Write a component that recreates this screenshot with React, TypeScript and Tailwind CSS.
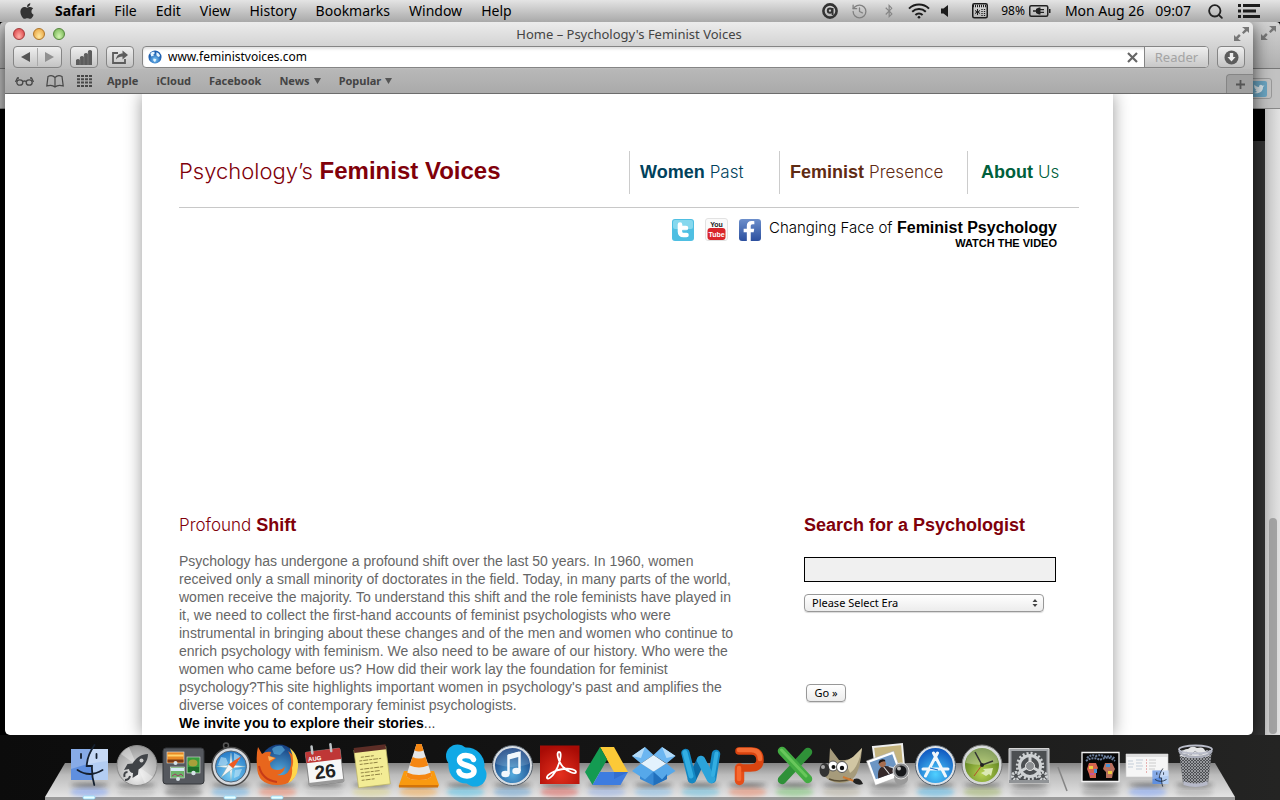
import React from "react";
import { FaApple, FaBluetoothB, FaFacebookF } from "react-icons/fa";
import { History, Search } from "lucide-react";

const MENUS = ["File", "Edit", "View", "History", "Bookmarks", "Window", "Help"];

function MenuBar() {
  return (
    <header className="relative z-10 flex h-[22px] items-center justify-between bg-linear-to-b from-[#e4e4e4] to-[#a9a9a9] pl-[18px] pr-5 text-sm leading-5 text-black">
      <nav aria-label="Menu bar" className="flex items-center gap-[19px]">
        <button aria-label="Apple menu" className="text-[#333]">
          <FaApple size={18} />
        </button>
        <button className="font-bold">Safari</button>
        {MENUS.map((m) => (
          <button key={m}>{m}</button>
        ))}
      </nav>
      <div className="flex items-center">
        <svg className="mr-3" width="18" height="18" viewBox="0 0 18 18" fill="none" stroke="#333">
          <circle cx="9" cy="9" r="6.6" strokeWidth="2.6" />
          <circle cx="9" cy="8.6" r="2.2" strokeWidth="2" />
          <path d="M11.6 6v7" strokeWidth="1.8" />
        </svg>
        <History size={17} strokeWidth={1.8} className="mr-[14px] text-[#808080]" />
        <FaBluetoothB size={14} className="mr-3 text-[#868686]" />
        <svg className="mr-[10px]" width="22" height="16" viewBox="0 0 22 16" fill="none" stroke="#1c1c1c" strokeWidth="2">
          <path d="M1 5.6a14.4 14.4 0 0 1 20 0M4.2 8.8a9.8 9.8 0 0 1 13.6 0M7.4 12a5.4 5.4 0 0 1 7.2 0" />
          <circle cx="11" cy="14.3" r="1.3" fill="#1c1c1c" stroke="none" />
        </svg>
        <svg className="mr-[23px]" width="9" height="14" viewBox="0 0 9 14" fill="#1c1c1c">
          <path d="M1 4.5h2.500L8 1v12L3.500 9.500H1z" />
        </svg>
        <svg className="mr-[13px]" width="16" height="16" viewBox="0 0 16 16">
          <rect x="0.75" y="0.75" width="14.5" height="14" rx="1.5" fill="none" stroke="#1c1c1c" strokeWidth="1.5" />
          <path d="M1 3h14" stroke="#1c1c1c" strokeWidth="2.5" strokeDasharray="1 1" />
          <path d="M5.500 6v6M3 7.500l5 3M3 10.500l5-3" stroke="#1c1c1c" />
          <path d="M10 6v7M12.500 6v7" stroke="#1c1c1c" strokeWidth="1.3" strokeDasharray="1 1" />
        </svg>
        <span className="mr-1 text-xs">98%</span>
        <svg className="mr-[14px]" width="22" height="12" viewBox="0 0 22 12">
          <rect x="0.75" y="0.75" width="18" height="10.5" rx="1.5" fill="none" stroke="#222" strokeWidth="1.5" />
          <path d="M20 4h1.500v4H20z" fill="#222" />
          <path d="M4 5.300h3V4c2-1.500 3-1.500 4.500-1.500V4H15v1.200h-3.500v1.600H15V8h-3.500v1.500C10 9.500 9 9.500 7 8V6.700H4z" fill="#222" />
        </svg>
        <time className="mr-4 flex gap-[11px]">
          <span>Mon Aug 26</span>
          <span>09:07</span>
        </time>
        <button aria-label="Spotlight" className="mr-[14px]">
          <Search size={17} strokeWidth={2.6} className="text-[#222]" />
        </button>
        <button aria-label="Notification Center">
          <svg width="22" height="14" viewBox="0 0 22 14" fill="#1c1c1c">
            <path d="M0 0h3v3H0zM5 0h17v3H5zM0 5.500h3v3H0zM5 5.500h13v3H5zM0 11h3v3H0zM5 11h17v3H5z" />
          </svg>
        </button>
      </div>
    </header>
  );
}

function ResizeArrows() {
  return (
    <svg width="15" height="14" viewBox="0 0 15 14" fill="#777">
      <path d="M8 0h7v6l-2-2-3.500 3L8 5.500 11 2.200zM7 14H0V8l2 2 3-3 1.700 1.700L4 11.800z" />
    </svg>
  );
}

function BackgroundWindow() {
  return (
    <div aria-hidden="true" className="absolute inset-x-0 top-0 bottom-[65px] flex flex-col overflow-hidden rounded-t-[4px] bg-[#333]">
      <div className="flex h-[47px] justify-end border-b border-[#777] bg-linear-to-b from-[#d2d2d2] to-[#b0b0b0] pt-1 pr-1">
        <ResizeArrows />
      </div>
      <div className="flex h-10 items-center justify-end border-b border-[#888] bg-[#c2c2c2] pr-2">
        <div className="flex h-[21px] w-8 items-center justify-end rounded-[3px] border border-[#999] pr-1">
          <svg width="16" height="16" viewBox="0 0 16 16">
            <rect width="16" height="16" rx="2" fill="#6ba5c2" />
            <path d="M3 12c5 1 9-1 9-6l1.500-1.500-2 .2C10 3 8 4 8 6 5.500 6 4.500 5 3.500 3.800c-1 3 1 4.500 2 5.200L4 9l2 2z" fill="#dce8ed" />
          </svg>
        </div>
      </div>
      <div className="flex flex-1 bg-black">
        <div className="flex-1" />
        <div className="w-10 border-t-[32px] border-black bg-[#333]" />
        <div className="flex w-[15px] flex-col items-center justify-end bg-linear-to-r from-[#c6c6c6] to-[#e2e2e2] pb-px">
          <div className="h-[216px] w-2 rounded-full bg-[#a2a2a2]" />
        </div>
      </div>
    </div>
  );
}

const TOOL =
  "flex h-[22px] items-center justify-center rounded-[4px] border border-[#858585] bg-linear-to-b from-[#efefef] to-[#c4c4c4]";

function BrowserChrome() {
  return (
    <div className="border-b border-[#6c6c6c] bg-[#b0b0b0] text-[#444]">
      <div className="bg-linear-to-b from-[#ececec] to-[#bcbcbc]">
        <div className="grid h-6 grid-cols-[1fr_auto_1fr] items-center px-2">
          <div className="flex gap-2">
            <button aria-label="Close" className="size-3 rounded-full border border-[#a13a3a] bg-radial-[at_50%_75%] from-[#ffb0a8] to-[#d8363c]" />
            <button aria-label="Minimize" className="size-3 rounded-full border border-[#ad7427] bg-radial-[at_50%_75%] from-[#ffe9a0] to-[#e69a35]" />
            <button aria-label="Zoom" className="size-3 rounded-full border border-[#53853c] bg-radial-[at_50%_75%] from-[#d2f5b0] to-[#6cae4b]" />
          </div>
          <h1 className="text-[13px] leading-5">Home – Psychology's Feminist Voices</h1>
          <button aria-label="Full screen" className="-mr-1 justify-self-end">
            <ResizeArrows />
          </button>
        </div>
        <div className="flex h-[23px] gap-2 px-2">
          <div className={TOOL + " w-[49px]"}>
            <button aria-label="Back" className="flex flex-1 justify-center border-r border-[#aaa] py-1">
              <svg width="9" height="10" viewBox="0 0 9 10" fill="#555"><path d="M9 0v10L0 5z" /></svg>
            </button>
            <button aria-label="Forward" className="flex flex-1 justify-center py-1">
              <svg width="9" height="10" viewBox="0 0 9 10" fill="#909090"><path d="M0 0v10l9-5z" /></svg>
            </button>
          </div>
          <button aria-label="Top Sites" className={TOOL + " w-7"}>
            <svg width="16" height="15" viewBox="0 0 16 15" fill="#5c5c5c">
              <path d="M0 10q2-2 4 0v5H0zM4 7q2-2 4 0v8H4zM8 4q2-2 4 0v11H8zM12 1q2-2 4 0v14H12z" />
              <path d="M4 8v7M8 5v10M12 2v13" stroke="#888" strokeWidth=".5" />
            </svg>
          </button>
          <button aria-label="Share" className={TOOL + " w-7"}>
            <svg width="16" height="14" viewBox="0 0 16 14">
              <path d="M6 3H1v10h12V9" fill="none" stroke="#5c5c5c" strokeWidth="1.8" />
              <path d="M4 9.500C4.500 5.500 7 3.500 10.500 3.500V0.500L16 5l-5.500 4.500V6.500C8 6.500 6 7.300 4 9.500z" fill="#5c5c5c" />
            </svg>
          </button>
          <div className="flex h-[22px] flex-1 items-center overflow-hidden rounded-[4px] border border-[#858585] bg-white pl-[5px] shadow-[inset_0_2px_3px_rgba(0,0,0,0.12)]">
            <svg width="14" height="14" viewBox="0 0 15 15">
              <defs>
                <radialGradient id="globe" cx="0.5" cy="0.7">
                  <stop offset="0" stopColor="#7cc7f7" />
                  <stop offset="1" stopColor="#1a5cae" />
                </radialGradient>
              </defs>
              <circle cx="7.500" cy="7.500" r="7" fill="url(#globe)" />
              <path d="M2.500 4c1-2 3-2.500 4.500-2L7 4 5.500 5l1 1-3 1zM9 2.500c2 .5 3.500 2 4 4l-2 1-2-2zM6 9l3 1-1.500 3-2-2z" fill="#e6f5ff" />
            </svg>
            <input
              aria-label="Address"
              defaultValue="www.feministvoices.com"
              className="ml-[6px] min-w-0 flex-1 bg-transparent text-[12px] text-black outline-none"
            />
            <button aria-label="Stop loading" className="mr-[6px]">
              <svg width="11" height="11" viewBox="0 0 11 11" stroke="#666" strokeWidth="2.200"><path d="M1 1l9 9M10 1l-9 9" /></svg>
            </button>
            <button className="h-full w-16 border-l border-[#858585] bg-linear-to-b from-[#efefef] to-[#c8c8c8] text-[13px] leading-5 text-[#a4a4a4]">
              Reader
            </button>
          </div>
          <button aria-label="Downloads" className={TOOL + " w-7"}>
            <svg width="15" height="15" viewBox="0 0 15 15">
              <circle cx="7.500" cy="7.500" r="7" fill="#5c5c5c" />
              <path d="M5.800 3h3.400v4h2.300l-4 4.500-4-4.500h2.300z" fill="#eee" />
            </svg>
          </button>
        </div>
      </div>
      <div className="flex h-6 items-center bg-linear-to-b from-[#b8b8b8] to-[#aaaaaa] pl-[10px] text-[11px] font-bold leading-4">
        <button aria-label="Reading List">
          <svg width="19" height="9" viewBox="0 0 19 9" fill="none" stroke="#484848" strokeWidth="1.300">
            <ellipse cx="4.800" cy="5.500" rx="3" ry="2.700" />
            <ellipse cx="14.200" cy="5.500" rx="3" ry="2.700" />
            <path d="M7.800 4.500q1.700-1 3.400 0M4 1L2.500 1 .5 5M15 1l1.500 0 2 4" />
          </svg>
        </button>
        <button aria-label="Bookmarks" className="ml-3">
          <svg width="18" height="13" viewBox="0 0 18 13" fill="none" stroke="#484848" strokeWidth="1.200">
            <path d="M9 2.500C7 .5 4 .5 2 1.500L.8 11c3-1 6-1 8.200 1 2.200-2 5.200-2 8.200-1L16 1.500C14 .5 11 .5 9 2.500zM9 2.500V12" />
          </svg>
        </button>
        <button aria-label="Top Sites grid" className="mr-[15px] ml-[13px]">
          <svg width="15" height="12" viewBox="0 0 15 12" stroke="#484848" strokeWidth="2">
            <path d="M0 1h15M0 4.300h15M0 7.600h15M0 10.900h15" strokeDasharray="3 1" />
          </svg>
        </button>
        <div className="flex items-center gap-[18px]">
          <a href="#apple">Apple</a>
          <a href="#icloud">iCloud</a>
          <a href="#facebook">Facebook</a>
          <button className="flex items-center gap-1">
            News
            <svg width="7" height="6" viewBox="0 0 7 6" fill="#555"><path d="M0 0h7L3.500 6z" /></svg>
          </button>
          <button className="flex items-center gap-1">
            Popular
            <svg width="7" height="6" viewBox="0 0 7 6" fill="#555"><path d="M0 0h7L3.500 6z" /></svg>
          </button>
        </div>
        <button aria-label="New tab" className="ml-auto flex h-[19px] w-[27px] items-center justify-center self-end rounded-tl-[4px] border-t border-l border-[#858585] bg-[#9f9f9f]">
          <svg width="9" height="9" viewBox="0 0 9 9" stroke="#555" strokeWidth="1.800"><path d="M4.500 0v9M0 4.500h9" /></svg>
        </button>
      </div>
    </div>
  );
}

function SocialLinks() {
  return (
    <div className="flex gap-[11px]">
      <a href="#twitter" aria-label="Twitter">
        <svg width="22" height="23" viewBox="0 0 22 23">
          <rect width="22" height="22" y="1" rx="3" fill="#4fbfe2" />
          <rect x="1" y="2" width="20" height="9" rx="2" fill="#86d8ee" />
          <path d="M8 6.500v7q0 3.500 3.500 3.500h3M8 10h6" fill="none" stroke="#fff" strokeWidth="4.600" strokeLinecap="round" />
          <path d="M10.500 12.300h4.500M10.500 12.300v1q0 1.200 1.500 1.200h3" fill="none" stroke="#6fcbe8" strokeWidth=".8" />
        </svg>
      </a>
      <a href="#youtube" aria-label="YouTube" className="flex size-[23px] justify-center rounded-[3px] border border-[#e2e2e2] bg-[#fafafa]">
        <svg width="21" height="22" viewBox="0 0 21 22">
          <rect x="1.500" y="9" width="18" height="12" rx="3" fill="#d9252a" />
          <g fontFamily="Liberation Sans Narrow, Liberation Sans, sans-serif" fontWeight="bold" textAnchor="middle">
            <text x="10.500" y="8" fontSize="7" fill="#222">You</text>
            <text x="10.500" y="17.500" fontSize="7" fill="#fff">Tube</text>
          </g>
        </svg>
      </a>
      <a href="#facebook-page" aria-label="Facebook page" className="mt-px flex size-[22px] items-end justify-end overflow-hidden rounded-[3px] bg-linear-to-b from-[#6d8fcb] to-[#2c4f9e] pr-[2px] text-white">
        <FaFacebookF size={20} />
      </a>
    </div>
  );
}

function SitePage() {
  return (
    <div className="flex flex-1 overflow-hidden rounded-b-[4px] bg-white pr-[3px] font-['Liberation_Sans',Arial,sans-serif]">
      <main className="mx-auto w-full max-w-[971px] bg-white pt-[57px] pr-[34px] pb-[3px] pl-[37px] shadow-[0_0_16px_rgba(0,0,0,0.4)]">
        <div className="flex w-full items-start justify-between border-b border-[#c8c8c8] pb-[13px]">
          <h2 className="text-2xl leading-10 font-bold text-[#80000a]">
            <span className="font-['Inter'] text-[22px] font-light">Psychology’s</span> Feminist Voices
          </h2>
          <nav aria-label="Site" className="flex text-lg leading-[43px] font-bold">
            <a href="#past" className="w-[150px] border-l border-[#ccc] pl-[10px] text-[#00425c]">
              Women <span className="font-['Inter'] text-[17px] font-light">Past</span>
            </a>
            <a href="#presence" className="w-[188px] border-l border-[#ccc] pl-[10px] text-[#5f2b13]">
              Feminist <span className="font-['Inter'] text-[17px] font-light">Presence</span>
            </a>
            <a href="#about" className="w-28 border-l border-[#ccc] pl-[13px] text-[#00603c]">
              About <span className="font-['Inter'] text-[17px] font-light">Us</span>
            </a>
          </nav>
        </div>
        <div className="flex justify-end gap-2 pt-[10px] pr-[22px]">
          <SocialLinks />
          <a href="#video" className="text-right font-bold text-black">
            <span className="block text-base leading-5">
              <span className="font-['Inter'] text-[15px] font-light">Changing Face of</span> Feminist Psychology
            </span>
            <span className="block text-[11px] leading-[11px]">WATCH THE VIDEO</span>
          </a>
        </div>
        <div className="mt-[264px] flex">
          <section className="w-[625px]">
            <h3 className="text-lg leading-6 font-bold text-[#80000a]">
              <span className="font-['Inter'] text-[17px] font-light">Profound</span> Shift
            </h3>
            <p className="mt-[15px] max-w-[562px] text-sm leading-[18px] text-[#666]">
              Psychology has undergone a profound shift over the last 50 years. In 1960, women received only a small
              minority of doctorates in the field. Today, in many parts of the world, women receive the majority. To
              understand this shift and the role feminists have played in it, we need to collect the first-hand accounts
              of feminist psychologists who were instrumental in bringing about these changes and of the men and women
              who continue to enrich psychology with feminism. We also need to be aware of our history. Who were the
              women who came before us? How did their work lay the foundation for feminist psychology?This site
              highlights important women in psychology's past and amplifies the diverse voices of contemporary feminist
              psychologists.
            </p>
            <p className="text-sm leading-[18px] text-[#444]">
              <b className="text-black">We invite you to explore their stories</b>...
            </p>
          </section>
          <form className="flex w-[252px] flex-col items-start" onSubmit={(e) => e.preventDefault()}>
            <label htmlFor="name" className="text-lg leading-6 font-bold text-[#80000a]">
              Search for a Psychologist
            </label>
            <input id="name" type="text" className="mt-5 h-[25px] w-full border border-black bg-[#f0f0f0] px-1 text-sm" />
            <div className="relative mt-3 w-60 font-['Noto_Sans',sans-serif]">
              <select
                aria-label="Era"
                className="block h-[18px] w-full appearance-none rounded-[4px] border border-[#989898] bg-linear-to-b from-white to-[#ececec] pl-[7px] text-[11px] leading-4 text-black shadow-[0_1px_1px_rgba(0,0,0,0.15)]"
              >
                <option>Please Select Era</option>
              </select>
              <svg className="pointer-events-none absolute top-[5px] right-[6px]" width="6" height="8" viewBox="0 0 6 8" fill="#444">
                <path d="M3 0l2.500 3h-5zM3 8L.5 5h5z" />
              </svg>
            </div>
            <button className="mt-[72px] ml-0.5 h-[18px] w-10 rounded-[4px] border border-[#989898] bg-linear-to-b from-white to-[#ececec] font-['Noto_Sans',sans-serif] text-[11px] leading-4 text-black shadow-[0_1px_1px_rgba(0,0,0,0.15)]">
              Go »
            </button>
          </form>
        </div>
      </main>
    </div>
  );
}

type DockItem = { name: string; glow: string; running?: boolean; art: React.ReactNode };

const FACE = (
  <>
    <path d="M5 14h22c-4 6-6 11-6.500 17H26c0 5 .3 9 1 14H5z" fill="#5f8fdf" />
    <path d="M27 14h15v31H27c-.7-5-1-9-1-14h-5.500c.5-6 2.500-11 6.500-17z" fill="#b3cdf2" />
    <path d="M5 14h37v12Q22 28 5 34z" fill="#fff" opacity=".25" />
    <path d="M28.500 10C23.500 17 21 24 20.700 31H26c-.3 7 .5 13 2.300 19M11.500 35q12 8 25 0M15 19v4M30.500 19v4" fill="none" stroke="#15202f" strokeWidth="1.800" strokeLinecap="round" />
  </>
);

const DOCK: DockItem[] = [
  { name: "Finder", glow: "#5f8fff", running: true, art: FACE },
  {
    name: "Launchpad",
    glow: "#aaa",
    art: (
      <>
        <circle cx="24" cy="30.500" r="20" fill="url(#silver)" stroke="#8a8a8a" />
        <path d="M24 30.500L8 19a20 20 0 0 1 8-7zM24 30.500L40 42a20 20 0 0 1-8 7z" fill="#fff" opacity=".35" />
        <path d="M35 19c-7 0-12 4-15.500 9.500l-5 .5-3.500 6 5-1c0 2 2 4 4 4l-.5 5 5.500-3.500.5-5C31 31 35 26 35 19z" fill="#404347" />
        <circle cx="28.500" cy="25.500" r="2" fill="#ccc" />
        <path d="M14.500 37q-4 0-3 5M17 41q-1 4-5 4" fill="none" stroke="#404347" strokeWidth="2" />
      </>
    ),
  },
  {
    name: "Mission Control",
    glow: "#444",
    art: (
      <>
        <rect x="3" y="13" width="41" height="36" rx="3" fill="#55585e" stroke="#34363a" />
        <g stroke="#ddd" strokeWidth=".6">
          <rect x="7" y="17" width="17" height="11" fill="#e98925" />
          <rect x="27" y="22" width="13" height="16" fill="#369b3d" />
          <rect x="10.500" y="32" width="14" height="11" fill="#6cb56b" />
        </g>
        <path d="M7.500 24.500h16v3h-16z" fill="#7b3a15" />
        <path d="M7.500 19.500h16v2h-16z" fill="#ffd36d" />
        <ellipse cx="33" cy="28" rx="4.500" ry="3.500" fill="#a8a03a" />
        <path d="M28 32h11v5H28z" fill="#1f6e2b" />
        <path d="M11 33h13v3H11z" fill="#d6e9f4" />
        <path d="M12 41l3-2 3 2 3-2 2 2" stroke="#a03a6a" fill="none" />
        <g fill="#d7e2e8">
          <circle cx="15.500" cy="28" r="2" /><circle cx="33.500" cy="38" r="2.200" /><circle cx="18" cy="44" r="2" />
        </g>
      </>
    ),
  },
  {
    name: "Safari",
    glow: "#3fa0e8",
    running: true,
    art: (
      <>
        <circle cx="19" cy="10.500" r="2.500" fill="none" stroke="#555" strokeWidth="1.500" />
        <circle cx="24" cy="31.500" r="19" fill="#d6d9dd" stroke="#4a4a4a" strokeWidth="1.500" />
        <circle cx="24" cy="31.500" r="15.500" fill="url(#blue)" stroke="#567" />
        <path d="M14 22l5 1 2 5-4 4-6-2zM27 18l6 3-1 5-5-1zM28 35l7-1-3 7-5 2z" fill="#bfe4f6" opacity=".6" />
        <path d="M24 18l1.400 12 12.600 1.500-12.600 1.500L24 45l-1.400-12L10 31.500 22.600 30z" fill="#f3f8fb" stroke="#9bb" strokeWidth=".4" />
        <path d="M34.500 21L26 33.500 21.500 29.500z" fill="#ee5a22" />
        <path d="M14 42.500l7.500-13L26 33.500z" fill="#f6f6f6" stroke="#8aa" strokeWidth=".5" />
      </>
    ),
  },
  {
    name: "Firefox",
    glow: "#f2643e",
    running: true,
    art: (
      <>
        <circle cx="25" cy="28" r="18.500" fill="url(#deep)" />
        <path d="M18 14q4-4 10-3l3 4-5 5-6-1z" fill="#56a7d7" opacity=".7" />
        <path d="M4 12l4 7q4-3 9-2l-1 4 6 2-6 5q0 7 7 7 6 0 8-4-1 8-8 9 12 2 14-10 1-8-3-14 9 6 9 17-1 17-20 17Q3 50 3 31q-1-12 1-19z" fill="#e8661d" />
        <path d="M36 13q9 8 8 19-1 12-10 16 5-7 4-15 3-9-2-20z" fill="#ffd64a" />
        <path d="M14 21l7 2-6 3z" fill="#f8b45e" />
        <path d="M5 31q3 14 18 16" fill="none" stroke="#c63b18" strokeWidth="2" />
      </>
    ),
  },
  {
    name: "Calendar",
    glow: "#bbb",
    art: (
      <g transform="rotate(-7 24 31)">
        <rect x="6" y="15" width="35" height="34" rx="1.500" fill="#f7f7f7" stroke="#777" strokeWidth=".8" />
        <path d="M6 15h35v11H6z" fill="#bf3736" />
        <path d="M6 46h35v3H6z" fill="#999" />
        <path d="M13 10v7M32 10v7" stroke="#bfc4c8" strokeWidth="2.500" strokeLinecap="round" />
        <text x="8" y="24.500" fontSize="6" fontWeight="bold" fill="#fff">AUG</text>
        <text x="23.500" y="43" fontSize="19" fontWeight="bold" fill="#222" textAnchor="middle">26</text>
      </g>
    ),
  },
  {
    name: "Stickies",
    glow: "#d9cf6e",
    art: (
      <g transform="rotate(-7 24 31)">
        <path d="M8 13h32v38H8z" fill="#f3ec95" stroke="#b9b165" strokeWidth=".7" />
        <path d="M8 11h32v5H8z" fill="#5c2d26" />
        <path d="M14 21h14M12 24.500h22M12 28h18M12 33h23M12 36.500h19M12 40h21M12 44h14" stroke="#8c7d3e" strokeWidth=".9" strokeDasharray="3 1 5 1" />
      </g>
    ),
  },
  {
    name: "VLC",
    glow: "#ff9a1f",
    art: (
      <>
        <path d="M9 36h30l5 14q0 2-2 2H5q-2 0-1-2z" fill="#f99a10" />
        <path d="M4 50h39v2.500H4z" fill="#d37408" />
        <path d="M21.500 9h5l10 31q0 5-12.500 5T11.500 40z" fill="#e6e6e6" />
        <path d="M21.500 9h5l2 6.500q-4.500 2-9 0zM17.500 22q6.500 3 13 0l2.700 8.500q-9.200 4-18.400 0zM12 37.500q12 5 24 0l.5 2.500q0 5-12.500 5T11.500 40z" fill="#f58611" />
      </>
    ),
  },
  {
    name: "Skype",
    glow: "#20b7ec",
    art: (
      <>
        <circle cx="15.500" cy="21" r="11.500" fill="#11a9e6" />
        <circle cx="33" cy="40" r="11.500" fill="#11a9e6" />
        <circle cx="24.500" cy="30.500" r="18" fill="#11a9e6" />
        <path d="M31.500 24.500C30 19.500 17.500 18.500 17.500 25c0 6.500 14.500 4.500 14.500 11 0 6.500-13.500 6.500-15 .5" fill="none" stroke="#fff" strokeWidth="5.500" strokeLinecap="round" />
      </>
    ),
  },
  {
    name: "iTunes",
    glow: "#418fd0",
    art: (
      <>
        <circle cx="23.500" cy="30.500" r="20" fill="#d7dde3" stroke="#56606a" />
        <circle cx="23.500" cy="30.500" r="17.500" fill="url(#deep)" />
        <path d="M7 29a16.500 16.500 0 0 1 33 0q-16 6-33 0z" fill="#fff" opacity=".15" />
        <path d="M19.500 39V21l11-3v18" fill="none" stroke="#f2f8fc" strokeWidth="2.500" />
        <path d="M19.500 22l11-3" stroke="#f2f8fc" strokeWidth="5" />
        <ellipse cx="16.500" cy="39" rx="4.200" ry="3.300" fill="#f2f8fc" />
        <ellipse cx="27.500" cy="36" rx="4.200" ry="3.300" fill="#f2f8fc" />
      </>
    ),
  },
  {
    name: "Adobe Reader",
    glow: "#e0352b",
    art: (
      <>
        <path d="M4 10.500h39.500V49H4z" fill="url(#red)" />
        <path d="M23 17c4 0 0 14-4 20-3 5-7 8-8 6-1-3 8-8 16-9 8-1 13 1 13 3 0 3-8 0-13-5-5-6-7-15-4-15z" fill="none" stroke="#fff" strokeWidth="1.800" />
      </>
    ),
  },
  {
    name: "Google Drive",
    glow: "#7ca0e8",
    art: (
      <>
        <path d="M17 12h14l14 25H31z" fill="#fcc937" />
        <path d="M17 12l7 12.500L9.500 50 2 37z" fill="#149b52" />
        <path d="M17 37h28l-7.500 13h-28z" fill="#3d7ce0" />
        <path d="M17 12l7 12.500L17 37z" fill="#0a8443" opacity=".4" />
        <path d="M31 37h14l-14 7z" fill="#2c5fc0" opacity=".5" />
      </>
    ),
  },
  {
    name: "Dropbox",
    glow: "#67b2ec",
    art: (
      <>
        <path d="M10 36v8l13.500 6.500L37 44v-8z" fill="#3789d4" />
        <path d="M15 12L2 21l9 7.500L23.500 20zM32 12l13.500 9-9 7.500L23.500 20z" fill="#6cb6f1" />
        <path d="M11 28.500L2 36l13 8.500 8.500-8zM36.500 28.500l9 7.500L32 44.500l-8.500-8z" fill="#56a8ea" />
        <path d="M23.500 20L36 28.500l-12.500 8-12.500-8z" fill="#e3f2fd" />
        <path d="M15 12L2 21l9 2zM32 12l13.500 9-9 2z" fill="#b4dbf8" />
        <path d="M23.500 37v13.500L37 44v-5l-5 5.500z" fill="#2170bd" />
      </>
    ),
  },
  {
    name: "Word",
    glow: "#3eb4e0",
    art: (
      <g fill="none" strokeLinecap="round">
        <g strokeWidth="8.500">
          <path d="M39 19L35 44" stroke="#1489c4" />
          <path d="M15 44L24 25" stroke="#0c6ba5" />
          <path d="M24 25L34 44" stroke="#2ba4da" />
          <path d="M8.500 18L15 44" stroke="#1489c4" />
        </g>
        <path d="M8 17.500L14 41" stroke="#33aee2" strokeWidth="5" />
        <path d="M39.500 18.500L36 40" stroke="#33aee2" strokeWidth="4" />
      </g>
    ),
  },
  {
    name: "PowerPoint",
    glow: "#ef6b41",
    art: (
      <g fill="none" strokeLinecap="round" strokeLinejoin="round">
        <path d="M15.500 33v12.500" stroke="#e64e19" strokeWidth="9.500" />
        <path d="M15 16h12q9 0 9 9 0 8-10 8H16" stroke="#d94410" strokeWidth="7.500" />
        <path d="M15 15h12q9 0 9 9" stroke="#f56c33" strokeWidth="4.500" />
        <path d="M15 33v11" stroke="#f8692f" strokeWidth="4.500" />
      </g>
    ),
  },
  {
    name: "Excel",
    glow: "#56bb4d",
    art: (
      <g fill="none" strokeLinecap="round">
        <path d="M37 17L11 45" stroke="#2f9138" strokeWidth="8.500" />
        <path d="M11 16L37 44" stroke="#43ac42" strokeWidth="8.500" />
        <path d="M10.500 15L35 41" stroke="#68c65b" strokeWidth="3" />
      </g>
    ),
  },
  {
    name: "GIMP",
    glow: "#aaa38b",
    art: (
      <>
        <path d="M12 13l9 12q8 1 14-3l9-9q-1 14-4 22-4 13-18 13-9 0-17-8l6-9z" fill="#a69b7b" />
        <path d="M44 13l-9 9q-4 3-8 4l5 12q8-5 12-25z" fill="#d1c6a3" />
        <circle cx="15" cy="31" r="5" fill="#fff" stroke="#555" /><circle cx="24" cy="32" r="5.500" fill="#fff" stroke="#555" />
        <circle cx="15.500" cy="32" r="2" fill="#111" /><circle cx="24" cy="33" r="2.200" fill="#111" />
        <ellipse cx="6.500" cy="35" rx="5" ry="7" fill="#333" /><circle cx="5" cy="32" r="2" fill="#aaa" />
        <path d="M11 44q10 4 22 0" fill="none" stroke="#584c33" strokeWidth="1.500" />
        <path d="M25 42l11 4" stroke="#cf7933" strokeWidth="2" />
        <path d="M36 44q6-2 9 5-6 2-10-2z" fill="#222" />
      </>
    ),
  },
  {
    name: "iPhoto",
    glow: "#888",
    art: (
      <>
        <path d="M8 12l29-3 2 22-28 3z" fill="#c5b47e" stroke="#eee" strokeWidth="2" />
        <g transform="rotate(-20 20 33)">
          <path d="M5 20h29v26H5z" fill="#fff" stroke="#aaa" strokeWidth=".5" />
          <path d="M7.500 22.500h24v18h-24z" fill="#6d96c4" />
          <path d="M10 40.500q2-9 8-10 8 1 11 10z" fill="#35292a" />
          <path d="M19 31l3 9M24 33l5 3" stroke="#ddd" />
          <circle cx="19" cy="28" r="3.500" fill="#a66d50" />
          <path d="M15.500 27q1-4 5-3 3 1 2 3-3-2-7 0z" fill="#1d1513" />
        </g>
        <path d="M29 41h14q1 8-7 9-7 0-7-9z" fill="#9a9a9a" />
        <circle cx="36" cy="36" r="8" fill="#8b8d90" stroke="#ddd" />
        <circle cx="36" cy="36" r="5.500" fill="#16181b" /><circle cx="34" cy="33.500" r="2" fill="#bbb" />
      </>
    ),
  },
  {
    name: "App Store",
    glow: "#21a7e8",
    art: (
      <>
        <circle cx="23.500" cy="30.500" r="20" fill="#dde2e7" stroke="#56606a" />
        <circle cx="23.500" cy="30.500" r="17.500" fill="url(#store)" />
        <path d="M25.500 18L13.500 41M21.500 18l12 23M11 34h25" stroke="#f1f7fb" strokeWidth="3" strokeLinecap="round" />
        <path d="M18 33l8 2" stroke="#196cc6" strokeWidth="1" />
      </>
    ),
  },
  {
    name: "Time Machine",
    glow: "#88a33c",
    art: (
      <>
        <circle cx="23" cy="30" r="20" fill="#d5d8d8" stroke="#777" />
        <circle cx="23" cy="30" r="17" fill="url(#lime)" />
        <path d="M7 28a16 16 0 0 1 32 0q-16 4-32 0z" fill="#fff" opacity=".3" />
        <path d="M34 33l-2 8-2-2-3 2-5-3 4-2-2-2z" fill="#dce9b4" />
        <path d="M16 17l7 13 11-4" fill="none" stroke="#333" strokeWidth="1.500" />
        <path d="M23 30l-8 11" stroke="#b54e2d" />
        <circle cx="23" cy="30" r="2" fill="#222" />
      </>
    ),
  },
  {
    name: "System Preferences",
    glow: "#999",
    art: (
      <>
        <path d="M3 13.500h40V48H3z" fill="#a2a5a9" stroke="#d5d5d5" />
        <path d="M5.500 16h35v29h-35z" fill="#4c4f52" />
        <g fill="none" stroke="#cfd2d4">
          <circle cx="24" cy="31" r="10.500" strokeWidth="3" />
          <circle cx="24" cy="31" r="12.700" strokeWidth="3" strokeDasharray="2 2" />
          <path d="M24 31V21M24 31l9 5M24 31l-9 5" strokeWidth="3" />
          <circle cx="10" cy="41" r="3.500" strokeWidth="3" strokeDasharray="2 1" />
          <circle cx="37" cy="41" r="3.500" strokeWidth="3" strokeDasharray="2 1" />
        </g>
        <circle cx="24" cy="31" r="4.500" fill="#8c8f92" stroke="#e2e2e2" />
        <path d="M3 45h40v3H3z" fill="#909396" />
      </>
    ),
  },
];

const DOCK_RIGHT: DockItem[] = [
  {
    name: "Picture window",
    glow: "#777",
    art: (
      <>
        <path d="M5 17.500h37v29H5z" fill="#060606" stroke="#f1f1f1" strokeWidth="1.300" />
        <path d="M10 23q4-4 9-2 5-2 10 1 6-2 9 2M9 26q7-5 14-1 8-5 15 1" fill="none" stroke="#687c9a" strokeWidth="2" strokeDasharray="2 1" />
        <path d="M12 28h7l2 5-2 3v7h-6l-1-4-2-5z" fill="#d5634f" />
        <path d="M28 28h7l3 6-2 4-1 5h-6v-6l-3-3z" fill="#b9705e" />
        <path d="M12 31h4v3h-4zM31 36h4v3h-4z" fill="#eacb40" />
        <path d="M17 34h3v4h-3zM29 29h4v3h-4z" fill="#4a8fd0" />
        <path d="M13 38h4v2h-4z" fill="#c4559c" />
      </>
    ),
  },
  {
    name: "Finder window",
    glow: "#5f8fff",
    art: (
      <>
        <path d="M2 19h42v23H2z" fill="#f6f6f6" stroke="#ccc" strokeWidth=".6" />
        <path d="M2 19h42v3H2z" fill="#dedede" />
        <path d="M4 26h5M4 29h6M4 32h5M12 25h7M12 28h6M12 31h7M12 34h6" stroke="#c3cdd8" />
        <path d="M22 25h1M22 28h1M22 31h1M22 34h1M22 37h1" stroke="#e29a9a" strokeWidth="1.500" />
        <path d="M25 25h7M25 28h7M25 31h7M25 34h6" stroke="#ccc" />
        <svg x="28" y="33" width="17" height="19" viewBox="4 9 39 42">{FACE}</svg>
      </>
    ),
  },
  {
    name: "Trash",
    glow: "#999",
    art: (
      <>
        <path d="M8 15h33l-4 33q-12 5-25 0z" fill="#4c4e52" />
        <path d="M8 15h33l-4 33q-12 5-25 0z" fill="url(#mesh)" />
        <path d="M9 21q3-8 8-7 4-4 9-1 7-2 8 3 5 1 4 5-14 4-29 0z" fill="#e4e5e6" />
        <path d="M15 17l5 3 4-4 5 4 4-2M13 20l4-1" fill="none" stroke="#a7a9ad" />
        <ellipse cx="24.500" cy="14.500" rx="16.500" ry="4" fill="none" stroke="#babdca" strokeWidth="1.800" />
        <path d="M8 16q3 6 16.500 6T41 16" fill="none" stroke="#a9acb8" strokeWidth="2" />
        <path d="M12.500 46q12 5 24 0v4q-12 4-24 0z" fill="#b6b9c8" />
      </>
    ),
  },
];

function DockIcon({ item }: { item: DockItem }) {
  return (
    <button aria-label={item.name} className="w-[47px]">
      <svg width="47" height="65" viewBox="0 0 47 65" fontFamily="Liberation Sans, sans-serif">
        <ellipse cx="23.500" cy="57" rx="19" ry="5" fill={item.glow} opacity=".4" filter="url(#soft)" />
        <ellipse cx="23.500" cy="50" rx="19" ry="2" fill="#222" opacity=".5" filter="url(#soft)" />
        {item.art}
        {item.running && <rect x="17" y="61" width="12" height="3" rx="1.500" fill="#eaffff" stroke="#8fdcff" strokeWidth=".8" />}
      </svg>
    </button>
  );
}

function Gradients() {
  const radial: [string, string, string][] = [
    ["silver", "#f3f3f3", "#999"],
    ["blue", "#7bd0f5", "#2277c5"],
    ["deep", "#54acdf", "#123b7c"],
    ["store", "#4fd0ff", "#0d54be"],
    ["lime", "#b6d252", "#4f7418"],
    ["red", "#e5301e", "#a80b05"],
  ];
  return (
    <svg width="0" height="0" className="absolute" aria-hidden="true">
      <defs>
        {radial.map(([id, a, b]) => (
          <radialGradient key={id} id={id} cx="0.5" cy="0.75" r="0.75">
            <stop offset="0" stopColor={a} />
            <stop offset="1" stopColor={b} />
          </radialGradient>
        ))}
        <pattern id="mesh" width="3" height="3" patternUnits="userSpaceOnUse">
          <path d="M0 0l3 3M3 0L0 3" stroke="#b1b3b8" strokeWidth=".7" />
        </pattern>
        <filter id="soft" x="-20%" y="-60%" width="140%" height="220%">
          <feGaussianBlur stdDeviation="2" />
        </filter>
      </defs>
    </svg>
  );
}

function Dock() {
  return (
    <footer className="relative flex h-[65px] justify-center bg-linear-to-r from-[#0c0c0c] via-[#151515] to-[#242423]">
      <div className="absolute bottom-0 h-[37px] w-full max-w-[1190px] border-b-[3px] border-[#9b9b9b] bg-linear-to-b from-[#858585] via-[#bcbcbc] via-35% to-[#e4e4e4] [clip-path:polygon(20px_0,calc(100%-20px)_0,100%_34px,100%_100%,0_100%,0_34px)]" />
      <Gradients />
      <div className="relative flex pl-1">
        {DOCK.map((item) => (
          <DockIcon key={item.name} item={item} />
        ))}
        <svg width="24" height="65" viewBox="0 0 24 65" stroke="#858585" strokeWidth="1.500">
          <path d="M5 32l9 24" />
        </svg>
        {DOCK_RIGHT.map((item) => (
          <DockIcon key={item.name} item={item} />
        ))}
      </div>
    </footer>
  );
}

export default function App() {
  return (
    <div className="flex min-h-screen flex-col bg-black font-['Noto_Sans',sans-serif]">
      <MenuBar />
      <div className="relative flex flex-1 flex-col">
        <BackgroundWindow />
        <div className="relative mr-[27px] ml-[5px] flex flex-1 flex-col overflow-hidden rounded-[5px] shadow-[0_4px_18px_rgba(0,0,0,0.7)]">
          <BrowserChrome />
          <SitePage />
        </div>
        <Dock />
      </div>
    </div>
  );
}
